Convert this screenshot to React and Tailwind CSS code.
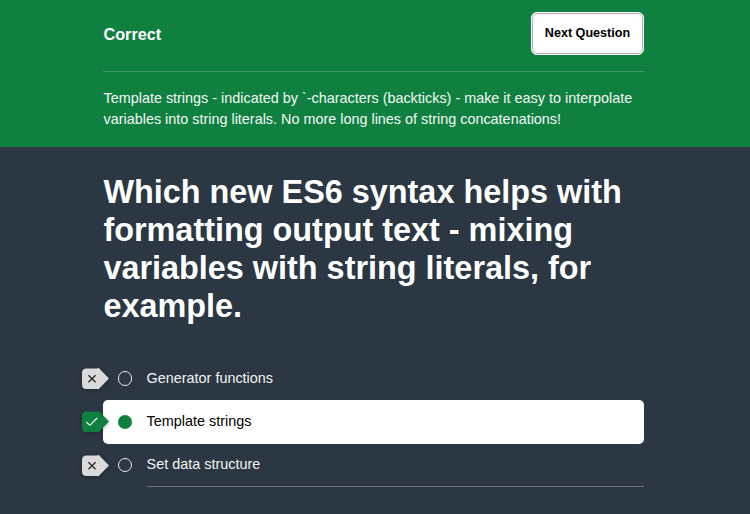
const answers = [
  { text: "Generator functions", correct: false },
  { text: "Template strings", correct: true },
  { text: "Set data structure", correct: false },
];

function Marker({ correct }) {
  return (
    <svg
      className="absolute -left-[21px] top-[11px] overflow-visible drop-shadow-[0_1px_2px_rgba(0,0,0,0.3)]"
      width="27"
      height="22"
      viewBox="0 0 27 22"
      fill="none"
      aria-hidden="true"
    >
      <path
        d="M4.5 .4H15L16.5 -.2L27 10.6L16.5 21.3L15 21H4.5Q0 21 0 16.5V5Q0 .4 4.5 .4Z"
        fill={correct ? "#108040" : "#dadada"}
      />
      {correct ? (
        <path d="M4.3 10.9L7.8 14.3L15.2 7" stroke="#fff" strokeWidth="1.1" />
      ) : (
        <path d="M6.4 7.2L13.6 14.2M13.6 7.2L6.4 14.2" stroke="#222" strokeWidth="1.2" />
      )}
    </svg>
  );
}

function Answer({ text, correct, last }) {
  return (
    <li
      className={
        correct
          ? "relative flex h-[44px] rounded-[5px] bg-white pl-[15px] text-black"
          : "relative flex h-[43px] pl-[15px] text-[#f3f4f5]"
      }
    >
      <Marker correct={correct} />
      <span
        className={
          correct
            ? "mt-[15px] size-[14px] shrink-0 rounded-full bg-[#108040]"
            : last
              ? "mt-[14px] size-[14px] shrink-0 rounded-full border border-[#e8eaeb]"
              : "mt-[14px] h-[15px] w-[14px] shrink-0 rounded-full border border-[#e8eaeb]"
        }
      />
      <span
        className={
          last
            ? "ml-[15px] grow border-b border-[#6a727a] pt-[10px] leading-[21px]"
            : "ml-[15px] grow pt-[11px] leading-[21px]"
        }
      >
        <span className="-ml-[0.4px]">{text}</span>
      </span>
    </li>
  );
}

export default function App() {
  return (
    <div className="h-[514px] overflow-hidden bg-[#2b3743] font-['Liberation_Sans',Arial,sans-serif] text-[14.4px]">
      <header className="h-[147px] bg-[#108040] pr-[106px] pl-[103px] text-white">
        <div className="flex h-[72px] items-start justify-between border-b border-[#409966] pt-[12px]">
          <h2 className="pt-[11px] pl-[0.5px] text-[16.2px] leading-[22px] font-bold">Correct</h2>
          <button className="h-[43px] w-[113px] rounded-[6px] border border-white bg-white text-[12.6px] font-bold text-black shadow-[inset_0_0_0_1px_#b0b0b0,inset_0_0_5px_rgba(0,0,0,0.12)]">
            Next Question
          </button>
        </div>
        <p className="pt-[16px] pl-[0.5px] leading-[21px] text-[#f3f9f5]">
          Template strings - indicated by `-characters (backticks) - make it easy to interpolate
          variables into string literals. No more long lines of string concatenations!
        </p>
      </header>
      <main className="pr-[106px] pl-[103px]">
        <h1 className="h-[210px] pt-[26px] pl-[0.4px] text-[32.4px] leading-[38px] font-bold text-white">
          Which new ES6 syntax helps with formatting output text - mixing variables with string
          literals, for example.
        </h1>
        <ul>
          {answers.map((answer, index) => (
            <Answer key={answer.text} {...answer} last={index === answers.length - 1} />
          ))}
        </ul>
      </main>
    </div>
  );
}
